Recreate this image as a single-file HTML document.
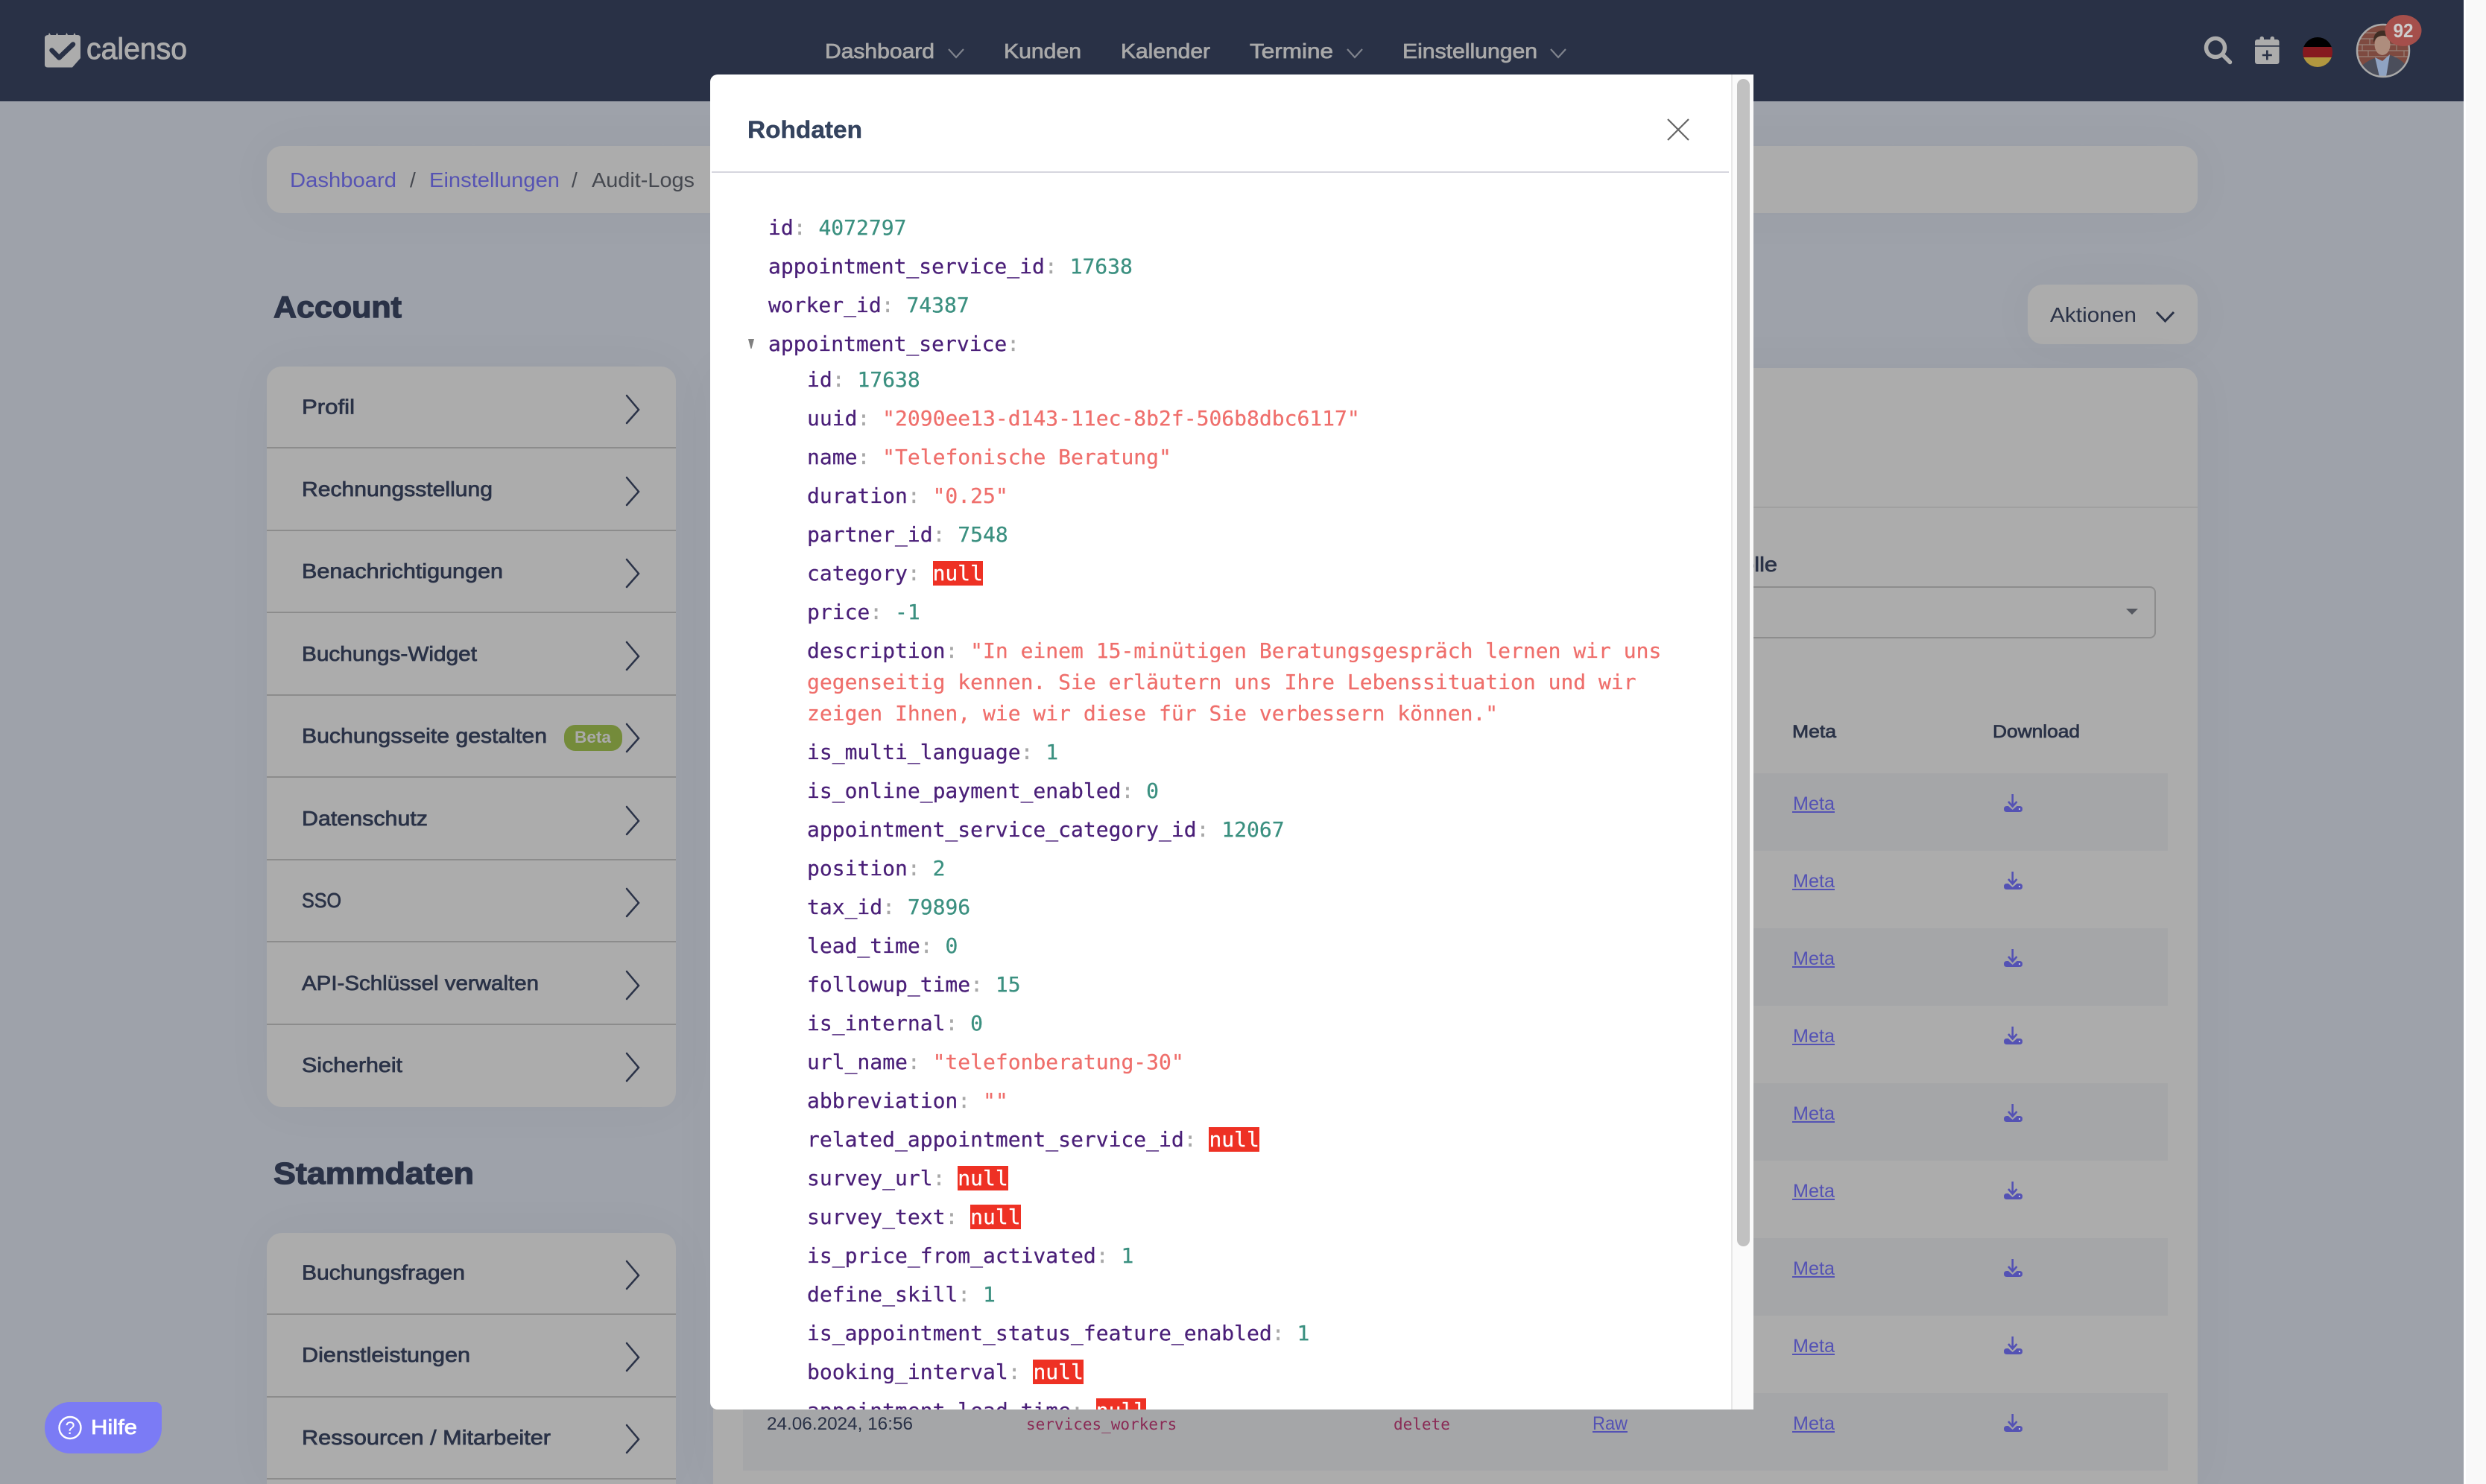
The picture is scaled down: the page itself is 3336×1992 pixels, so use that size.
<!DOCTYPE html>
<html lang="de"><head><meta charset="utf-8"><title>Audit-Logs</title>
<style>
html,body{margin:0;padding:0;width:3336px;height:1992px;overflow:hidden;background:#9ea2aa;font-family:"Liberation Sans",sans-serif}
#page{position:relative;width:3336px;height:1992px;overflow:hidden}
.b{position:absolute}
.card{background:#acacac;box-shadow:0 0 70px rgba(0,0,0,.035)}
svg.layer{position:absolute;left:0;top:0}
svg text{font-family:"Liberation Sans",sans-serif}
.sb{stroke-width:.75px;stroke:currentColor}
.m{font-family:"DejaVu Sans Mono",monospace!important}
#modal{position:absolute;left:953px;top:100px;width:1400px;height:1792px;background:#fff;border-radius:10px 0 0 10px;overflow:hidden;z-index:5}
#code{position:absolute;left:78px;top:185px;width:1240px;font:28px/42px "DejaVu Sans Mono",monospace;white-space:pre;-webkit-text-stroke:.25px currentColor}
#code div{height:42px;margin-bottom:10px}
#code .nest{margin-left:52px}
#code .nest div{height:42px}
#code div.d{height:126px}
#code i{font-style:normal;color:#4a1f78}
#code u{text-decoration:none;color:#a8a8a8}
#code b{font-weight:400;color:#3b9080}
#code s{text-decoration:none;color:#ef6f6c}
#code em{font-style:normal;background:#ee3124;color:#fff}
</style></head>
<body>
<div id="page">
<div class="b" style="left:0;top:0;width:3306px;height:136px;background:#293146"></div>
<div class="b" style="left:3306px;top:0;width:30px;height:1992px;background:#f9f9f9;box-sizing:border-box;border-left:3px solid #fff"></div>
<div class="b card" style="left:358px;top:196px;width:2591px;height:90px;border-radius:20px"></div>
<div class="b card" style="left:358px;top:492px;width:549px;height:994px;border-radius:20px"></div>
<div class="b card" style="left:358px;top:1655px;width:549px;height:337px;border-radius:20px 20px 0 0"></div>
<div class="b card" style="left:2721px;top:382px;width:228px;height:80px;border-radius:20px"></div>
<div class="b card" style="left:957px;top:494px;width:1992px;height:1498px;border-radius:20px 20px 0 0"></div>
<div class="b" style="left:957px;top:680px;width:1992px;height:2px;background:#a0a0a0"></div>
<div class="b" style="left:2300px;top:787px;width:593px;height:70px;box-sizing:border-box;border:2px solid #8d8d8d;border-radius:8px"></div>
<div class="b" style="left:997px;top:1038px;width:1912px;height:104px;background:#a5a6a8"></div>
<div class="b" style="left:997px;top:1246px;width:1912px;height:104px;background:#a5a6a8"></div>
<div class="b" style="left:997px;top:1454px;width:1912px;height:104px;background:#a5a6a8"></div>
<div class="b" style="left:997px;top:1662px;width:1912px;height:104px;background:#a5a6a8"></div>
<div class="b" style="left:997px;top:1870px;width:1912px;height:104px;background:#a5a6a8"></div>
<div class="b" style="left:60px;top:1882px;width:157px;height:69px;background:#7b7bf5;border-radius:34px 8px 34px 34px"></div>

<svg class="layer" width="3336" height="1992" viewBox="0 0 3336 1992" xmlns="http://www.w3.org/2000/svg">
<defs>
<g id="chev"><path d="M841 -18 L857 1 L841 19" fill="none" stroke="#2a3247" stroke-width="2.5" stroke-linecap="round" stroke-linejoin="miter"/></g>
<g id="nchev"><path d="M0 0 L10 11 L20 0" fill="none" stroke="#7f838d" stroke-width="2.2"/></g>
<g id="dl"><path d="M2700.7 1898 V1914 M2695 1908 L2700.7 1914.5 L2706.5 1908" fill="none" stroke="#5452b4" stroke-width="2.6"/><path d="M2693 1914 H2695 L2700.7 1919 L2706.5 1914 H2710 Q2714 1914 2714 1918 Q2714 1922 2710 1922 H2693 Q2689 1922 2689 1918 Q2689 1914 2693 1914Z" fill="#5452b4"/><circle cx="2710" cy="1918" r="1.1" fill="#cfcfe8"/></g>
<g id="metarow"><text x="2406" y="1919" font-size="25" fill="#5452b4" textLength="56" lengthAdjust="spacingAndGlyphs">Meta</text><rect x="2405" y="1921" width="57" height="2" fill="#5452b4"/><use href="#dl"/></g>
<clipPath id="av"><circle cx="3198" cy="68" r="35"/></clipPath>
</defs>

<!-- logo -->
<path d="M65 47 L66 44 L68 47 H75 L76.500 44 L78 47 H88 L89.500 44 L91 47 H98.500 L100 44 L101.500 47 H104 Q108 47 108 51 V78 L97 90.500 H64 Q60 90.500 60 87 V51 Q60 47 65 47Z" fill="#acacac"/>
<path d="M69.500 67.500 L79.300 77.500 L98 59.500" fill="none" stroke="#293146" stroke-width="6.500" stroke-linecap="round" stroke-linejoin="round"/>
<text x="116" y="79" font-size="40" fill="#acacac" stroke="#acacac" stroke-width=".9" textLength="135" lengthAdjust="spacingAndGlyphs">calenso</text>

<!-- nav -->
<g font-size="28" fill="#a9a9a9" color="#a9a9a9">
<text class="sb" x="1107" y="78" textLength="147" lengthAdjust="spacingAndGlyphs">Dashboard</text>
<text class="sb" x="1347" y="78" textLength="104" lengthAdjust="spacingAndGlyphs">Kunden</text>
<text class="sb" x="1504" y="78" textLength="120" lengthAdjust="spacingAndGlyphs">Kalender</text>
<text class="sb" x="1677" y="78" textLength="112" lengthAdjust="spacingAndGlyphs">Termine</text>
<text class="sb" x="1882" y="78" textLength="181" lengthAdjust="spacingAndGlyphs">Einstellungen</text>
</g>
<use href="#nchev" x="1273" y="66"/><use href="#nchev" x="1808" y="66"/><use href="#nchev" x="2081" y="66"/>

<!-- header icons -->
<circle cx="2973" cy="64" r="12.500" fill="none" stroke="#acacac" stroke-width="5.500"/>
<path d="M2983 74 L2992.500 83.500" stroke="#acacac" stroke-width="5.500" stroke-linecap="round"/>
<rect x="3026" y="53" width="32.500" height="33" rx="3" fill="#acacac"/>
<rect x="3032.500" y="49" width="5.500" height="8" rx="2.500" fill="#acacac"/><rect x="3046.500" y="49" width="5.500" height="8" rx="2.500" fill="#acacac"/>
<rect x="3026" y="61" width="32.500" height="1.700" fill="#293146"/>
<path d="M3042.300 67.500 V80.500 M3035.800 74 H3048.800" stroke="#293146" stroke-width="2.600"/>
<g>
<clipPath id="fl"><circle cx="3110" cy="70" r="20"/></clipPath>
<g clip-path="url(#fl)"><rect x="3090" y="50" width="40" height="13.500" fill="#000"/><rect x="3090" y="63" width="40" height="14" fill="#861a1f"/><rect x="3090" y="77" width="40" height="13" fill="#b1973f"/></g>
</g>
<g clip-path="url(#av)">
<rect x="3160" y="30" width="76" height="76" fill="#7e4a40"/>
<path d="M3160 44 H3236 M3160 52 H3236 M3160 60 H3236 M3160 68 H3236 M3160 76 H3236 M3172 36 V44 M3168 44 V52 M3180 52 V60 M3170 60 V68 M3178 68 V76 M3222 52 V60 M3216 60 V68 M3226 68 V76" stroke="#978279" stroke-width="1.200" fill="none"/>
<path d="M3166 106 V92 Q3172 84 3186 78 L3197 84 L3208 74 Q3224 80 3230 90 V106Z" fill="#4b4e5b"/>
<path d="M3187 77 L3193 103 H3202 L3207 73 L3197 82Z" fill="#8fa3c2"/>
<ellipse cx="3197" cy="60" rx="10.500" ry="14" fill="#ae8d7d"/>
<path d="M3185 58 Q3184 41 3198 41 Q3210 41 3208 58 Q3206 48 3198 48 Q3188 48 3185 58Z" fill="#3f2d24"/>
</g>
<circle cx="3198" cy="68" r="35" fill="none" stroke="#a9a9a9" stroke-width="2.500"/>
<ellipse cx="3225" cy="41" rx="24.500" ry="21" fill="#a54f4b"/>
<text x="3211.500" y="50" font-size="26" font-weight="700" fill="#cdcdcd" textLength="27" lengthAdjust="spacingAndGlyphs">92</text>

<!-- breadcrumb -->
<text x="389" y="251" font-size="28" fill="#5653b3" textLength="143" lengthAdjust="spacingAndGlyphs">Dashboard</text>
<text x="550" y="251" font-size="28" fill="#45484f">/</text>
<text x="576" y="251" font-size="28" fill="#5653b3" textLength="175" lengthAdjust="spacingAndGlyphs">Einstellungen</text>
<text x="767" y="251" font-size="28" fill="#45484f">/</text>
<text x="794" y="251" font-size="28" fill="#45484f" textLength="138" lengthAdjust="spacingAndGlyphs">Audit-Logs</text>

<!-- sidebar -->
<g color="#2a3247">
<text x="367" y="426" font-size="41" font-weight="700" fill="#2a3247" stroke="#2a3247" stroke-width="1.300" textLength="172" lengthAdjust="spacingAndGlyphs">Account</text>
<text x="367" y="1589" font-size="41" font-weight="700" fill="#2a3247" stroke="#2a3247" stroke-width="1.300" textLength="269" lengthAdjust="spacingAndGlyphs">Stammdaten</text>
<g font-size="28" fill="#2a3247">
<text class="sb" x="405" y="555.600" textLength="71" lengthAdjust="spacingAndGlyphs">Profil</text>
<text class="sb" x="405" y="666.100" textLength="256" lengthAdjust="spacingAndGlyphs">Rechnungsstellung</text>
<text class="sb" x="405" y="776" textLength="270" lengthAdjust="spacingAndGlyphs">Benachrichtigungen</text>
<text class="sb" x="405" y="887.100" textLength="235" lengthAdjust="spacingAndGlyphs">Buchungs-Widget</text>
<text class="sb" x="405" y="997" textLength="329" lengthAdjust="spacingAndGlyphs">Buchungsseite gestalten</text>
<text class="sb" x="405" y="1108.100" textLength="169" lengthAdjust="spacingAndGlyphs">Datenschutz</text>
<text class="sb" x="405" y="1218" textLength="53" lengthAdjust="spacingAndGlyphs">SSO</text>
<text class="sb" x="405" y="1329.100" textLength="318" lengthAdjust="spacingAndGlyphs">API-Schlüssel verwalten</text>
<text class="sb" x="405" y="1439" textLength="135" lengthAdjust="spacingAndGlyphs">Sicherheit</text>
<text class="sb" x="405" y="1717.500" textLength="219" lengthAdjust="spacingAndGlyphs">Buchungsfragen</text>
<text class="sb" x="405" y="1828" textLength="226" lengthAdjust="spacingAndGlyphs">Dienstleistungen</text>
<text class="sb" x="405" y="1939" textLength="334" lengthAdjust="spacingAndGlyphs">Ressourcen / Mitarbeiter</text>
</g>
</g>
<g>
<use href="#chev" y="549"/><use href="#chev" y="659"/><use href="#chev" y="769"/><use href="#chev" y="880"/><use href="#chev" y="990"/><use href="#chev" y="1101"/><use href="#chev" y="1211"/><use href="#chev" y="1322"/><use href="#chev" y="1432"/><use href="#chev" y="1711"/><use href="#chev" y="1821"/><use href="#chev" y="1931"/>
</g>
<g fill="#8c8c8c">
<rect x="358" y="600" width="549" height="2"/><rect x="358" y="711" width="549" height="2"/><rect x="358" y="821" width="549" height="2"/><rect x="358" y="932" width="549" height="2"/><rect x="358" y="1042" width="549" height="2"/><rect x="358" y="1153" width="549" height="2"/><rect x="358" y="1263" width="549" height="2"/><rect x="358" y="1374" width="549" height="2"/>
<rect x="358" y="1763" width="549" height="2"/><rect x="358" y="1874" width="549" height="2"/><rect x="358" y="1984" width="549" height="2"/>
</g>
<rect x="757" y="973" width="78" height="35" rx="15" fill="#748b3a"/>
<text x="771" y="997" font-size="22" font-weight="700" fill="#aaaaaa" textLength="49" lengthAdjust="spacingAndGlyphs">Beta</text>

<!-- actions -->
<text x="2751" y="432" font-size="28" fill="#2a3247" textLength="116" lengthAdjust="spacingAndGlyphs">Aktionen</text>
<path d="M2894 419 L2905.500 431 L2917 419" fill="none" stroke="#2a3247" stroke-width="3"/>

<!-- filter -->
<text x="2315" y="767" font-size="28" fill="#2a3247" color="#2a3247" class="sb" textLength="70" lengthAdjust="spacingAndGlyphs">Rolle</text>
<path d="M2853 817 H2869 L2861 825Z" fill="#555860"/>

<!-- table -->
<text class="sb" x="2405" y="990" font-size="24" fill="#2a3247" color="#2a3247" textLength="59" lengthAdjust="spacingAndGlyphs">Meta</text>
<text class="sb" x="2674" y="990" font-size="24" fill="#2a3247" color="#2a3247" textLength="117" lengthAdjust="spacingAndGlyphs">Download</text>
<use href="#metarow" y="-832"/><use href="#metarow" y="-728"/><use href="#metarow" y="-624"/><use href="#metarow" y="-520"/><use href="#metarow" y="-416"/><use href="#metarow" y="-312"/><use href="#metarow" y="-208"/><use href="#metarow" y="-104"/><use href="#metarow"/>
<text x="1029" y="1919" font-size="24" fill="#2a3247" textLength="196" lengthAdjust="spacingAndGlyphs">24.06.2024, 16:56</text>
<text class="m" x="1377" y="1919" font-size="21" fill="#8a2a55">services_workers</text>
<text class="m" x="1870" y="1919" font-size="21" fill="#8a2a55">delete</text>
<text x="2137" y="1919" font-size="25" fill="#5452b4" textLength="47" lengthAdjust="spacingAndGlyphs">Raw</text>
<rect x="2137" y="1921" width="47" height="2" fill="#5452b4"/>

<!-- help -->
<circle cx="94" cy="1916.500" r="14.500" fill="none" stroke="#fff" stroke-width="2.400"/>
<text x="87.500" y="1925" font-size="24" fill="#fff" textLength="13" lengthAdjust="spacingAndGlyphs">?</text>
<text x="122" y="1925" font-size="28" fill="#fff" color="#fff" class="sb" textLength="62" lengthAdjust="spacingAndGlyphs">Hilfe</text>
</svg>

<div id="modal">
<svg style="position:absolute;left:0;top:0" width="1400" height="1792" viewBox="953 100 1400 1792" xmlns="http://www.w3.org/2000/svg">
<text x="1003" y="185" font-size="32" font-weight="700" fill="#34435e" stroke="#34435e" stroke-width=".4" textLength="154" lengthAdjust="spacingAndGlyphs">Rohdaten</text>
<path d="M2238 160 L2266 188 M2266 160 L2238 188" stroke="#666" stroke-width="2.200" fill="none"/>
<rect x="955" y="230" width="1365" height="2" fill="#d6d6de"/>
<rect x="2323" y="100" width="30" height="1792" fill="#fafafa"/>
<rect x="2323" y="100" width="2" height="1792" fill="#e8e8e8"/>
<rect x="2331" y="106" width="17" height="1567" rx="8.500" fill="#c1c1c1"/>
<path d="M1004 455 H1012 L1008.500 468 H1007.500Z" fill="#808080"/>
</svg>
<div id="code"><div><i>id</i><u>:</u> <b>4072797</b></div><div><i>appointment_service_id</i><u>:</u> <b>17638</b></div><div><i>worker_id</i><u>:</u> <b>74387</b></div><div style="margin-bottom:6px"><i>appointment_service</i><u>:</u></div><div class="nest" style="height:auto;margin-bottom:0"><div><i>id</i><u>:</u> <b>17638</b></div><div><i>uuid</i><u>:</u> <s>"2090ee13-d143-11ec-8b2f-506b8dbc6117"</s></div><div><i>name</i><u>:</u> <s>"Telefonische Beratung"</s></div><div><i>duration</i><u>:</u> <s>"0.25"</s></div><div><i>partner_id</i><u>:</u> <b>7548</b></div><div><i>category</i><u>:</u> <em>null</em></div><div><i>price</i><u>:</u> <b>-1</b></div><div class="d"><i>description</i><u>:</u> <s>"In einem 15-minütigen Beratungsgespräch lernen wir uns
gegenseitig kennen. Sie erläutern uns Ihre Lebenssituation und wir
zeigen Ihnen, wie wir diese für Sie verbessern können."</s></div><div><i>is_multi_language</i><u>:</u> <b>1</b></div><div><i>is_online_payment_enabled</i><u>:</u> <b>0</b></div><div><i>appointment_service_category_id</i><u>:</u> <b>12067</b></div><div><i>position</i><u>:</u> <b>2</b></div><div><i>tax_id</i><u>:</u> <b>79896</b></div><div><i>lead_time</i><u>:</u> <b>0</b></div><div><i>followup_time</i><u>:</u> <b>15</b></div><div><i>is_internal</i><u>:</u> <b>0</b></div><div><i>url_name</i><u>:</u> <s>"telefonberatung-30"</s></div><div><i>abbreviation</i><u>:</u> <s>""</s></div><div><i>related_appointment_service_id</i><u>:</u> <em>null</em></div><div><i>survey_url</i><u>:</u> <em>null</em></div><div><i>survey_text</i><u>:</u> <em>null</em></div><div><i>is_price_from_activated</i><u>:</u> <b>1</b></div><div><i>define_skill</i><u>:</u> <b>1</b></div><div><i>is_appointment_status_feature_enabled</i><u>:</u> <b>1</b></div><div><i>booking_interval</i><u>:</u> <em>null</em></div><div><i>appointment_lead_time</i><u>:</u> <em>null</em></div></div></div>
</div>
</div>
</body></html>
